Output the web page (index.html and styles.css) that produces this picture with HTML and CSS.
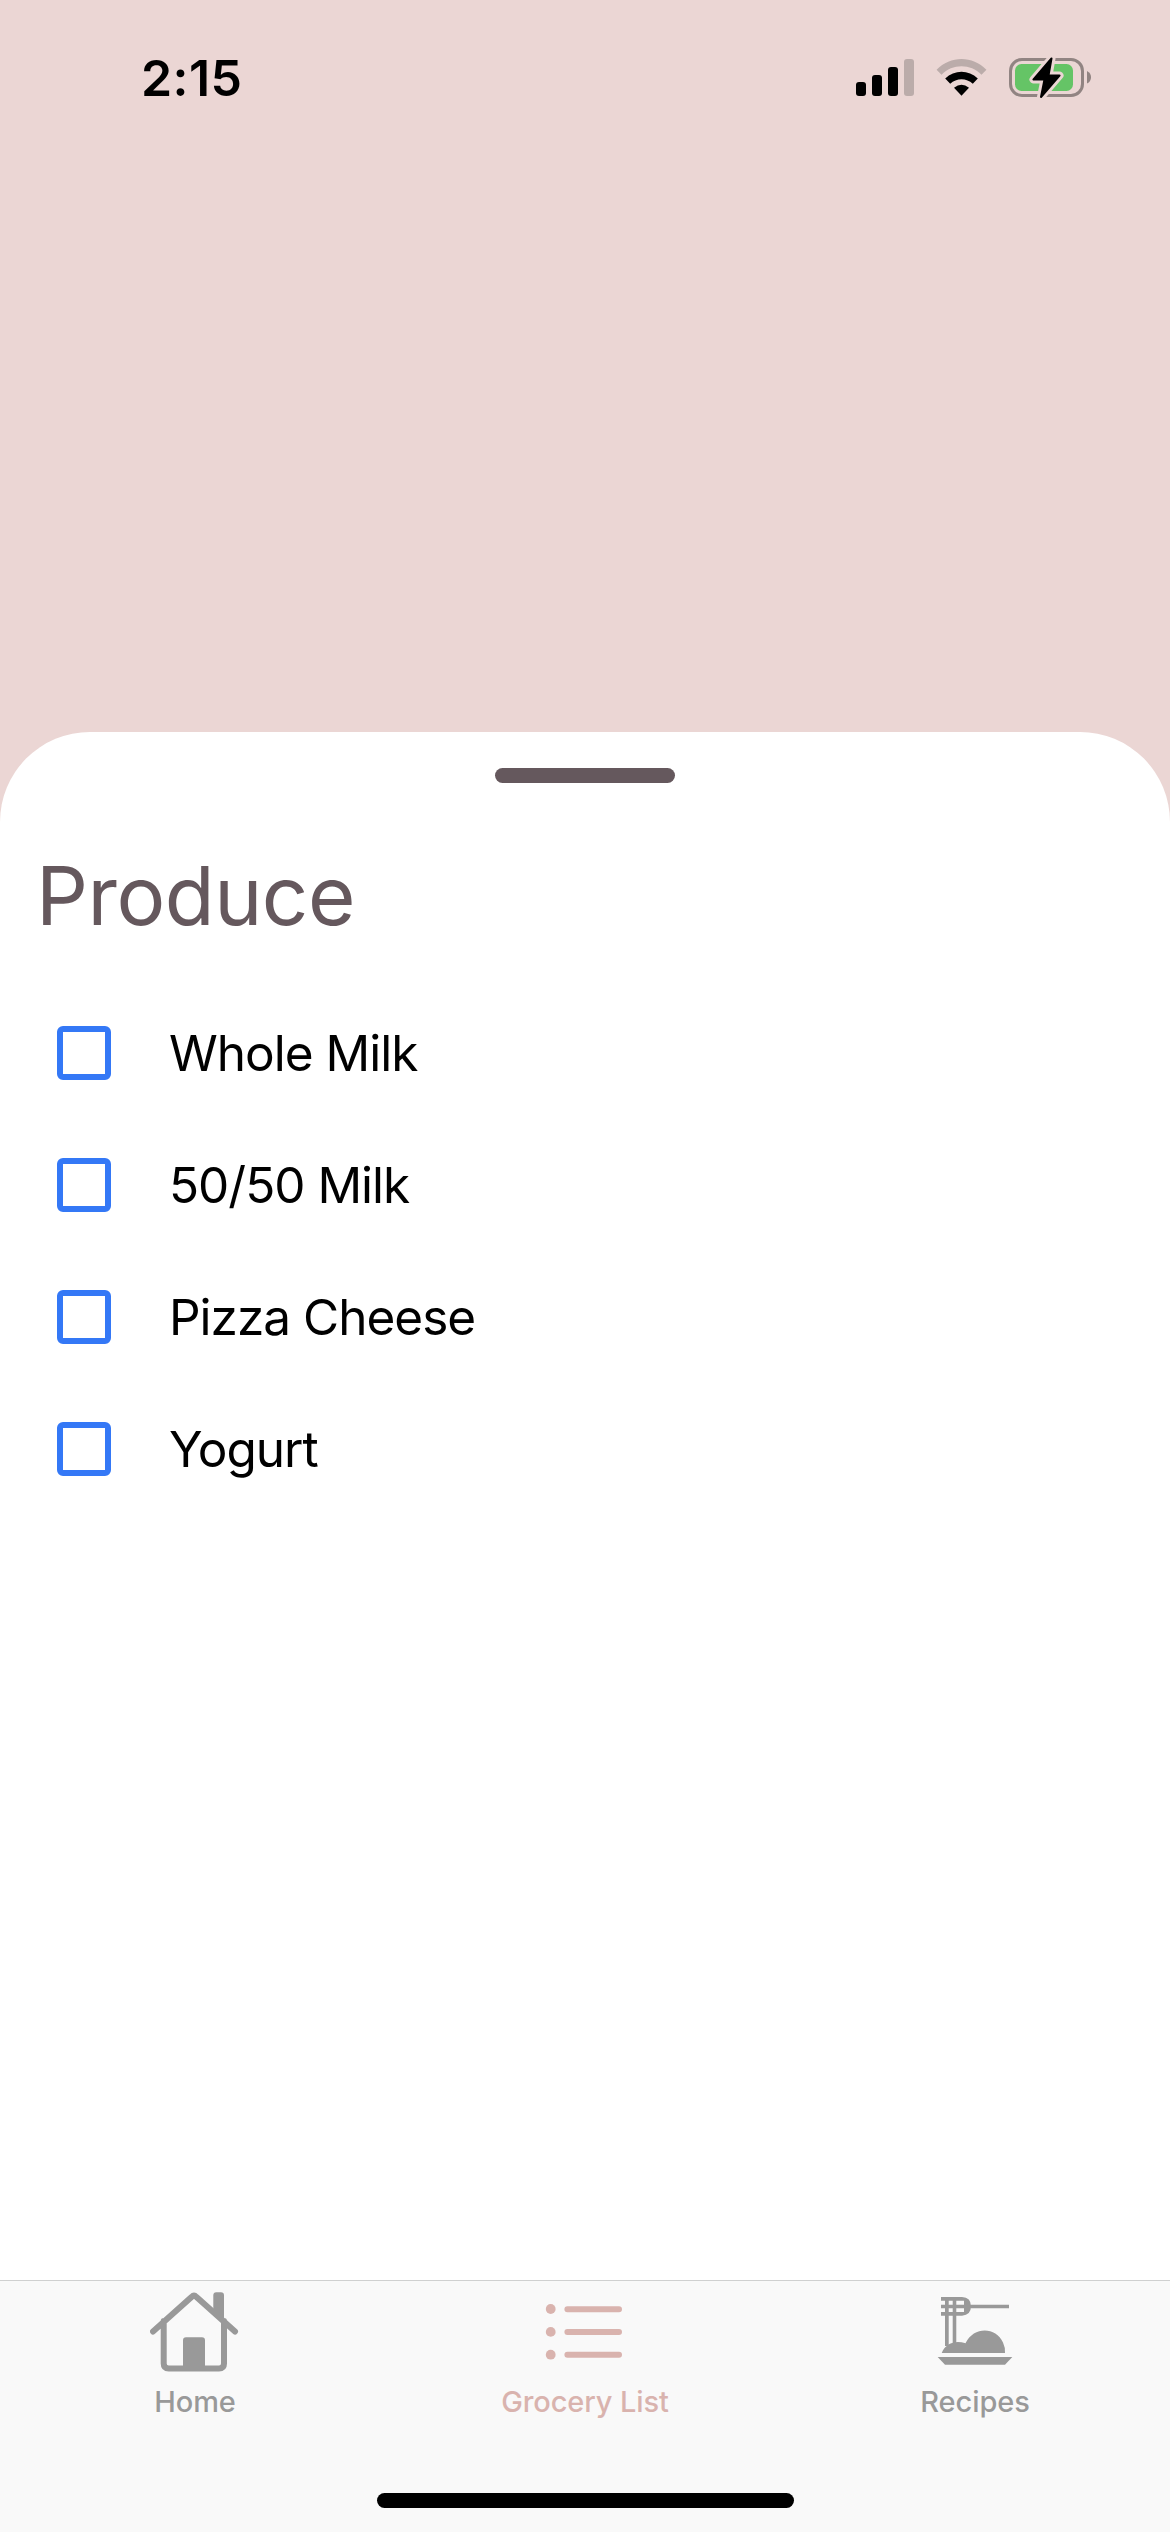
FILE: index.html
```html
<!DOCTYPE html>
<html lang="en">
<head>
<meta charset="utf-8">
<title>Grocery List</title>
<link rel="stylesheet" href="styles.css">
</head>
<body>
<div class="screen">
  <header class="status-bar">
    <span class="time">2:15</span>
    <div class="indicators">
      <svg class="signal" width="58" height="38" viewBox="0 0 58 38">
        <rect x="0" y="23" width="10" height="14" rx="3"/>
        <rect x="16" y="16" width="10" height="21" rx="3"/>
        <rect x="32" y="8" width="10" height="29" rx="3"/>
        <rect class="dim" x="48" y="0" width="10" height="37" rx="3"/>
      </svg>
      <svg class="wifi" width="52" height="38" viewBox="0 0 52 38">
        <path class="dim" d="M.6 10.7C14.5-3.5 36.500-3.500 50.400 10.700L45.500 15.700C34.500 4.500 16.500 4.500 5.500 15.700Z"/>
        <path d="M9.200 19.500C18.500 10.400 32.500 10.400 41.800 19.500L36.800 24.800C30.500 18.700 20.500 18.700 14.200 24.800Z"/>
        <path d="M18 28.700Q25.500 22.700 33 28.700L25.500 36.700Z"/>
      </svg>
      <svg class="battery" width="83" height="42" viewBox="0 0 83 42">
        <rect class="shell" x="1.500" y="3.500" width="72" height="36" rx="11.500"/>
        <rect class="charge" x="6" y="8" width="58" height="27" rx="6.500"/>
        <path class="tip" d="M78 15Q82 17 82 21.300T78 27.600Z"/>
        <path class="bolt-gap" d="M42.500 2.500L24.500 23.500H35.500L32 41L50.500 19.500H39.500Z"/>
        <path class="bolt" d="M42.500 2.500L24.500 23.500H35.500L32 41L50.500 19.500H39.500Z"/>
      </svg>
    </div>
  </header>

  <main class="sheet">
    <div class="handle"></div>
    <h1 class="title">Produce</h1>
    <ul class="items">
      <li class="item"><span class="checkbox"></span><span class="name">Whole Milk</span></li>
      <li class="item"><span class="checkbox"></span><span class="name">50/50 Milk</span></li>
      <li class="item"><span class="checkbox"></span><span class="name">Pizza Cheese</span></li>
      <li class="item"><span class="checkbox"></span><span class="name">Yogurt</span></li>
    </ul>
  </main>

  <footer class="footer">
    <nav class="tabs">
      <a class="tab">
        <svg width="90" height="90" viewBox="0 0 90 90">
          <path class="line" d="M3 45.500L41.500 11Q44 8.500 46.500 11L85 45.500M13.700 35V77.600Q13.700 82.500 18.700 82.500H69Q74 82.500 74 77.600V35"/>
          <path d="M33 83V54.300Q33 51.300 36 51.300H52Q55 51.300 55 54.300V83ZM63.300 27V9.300Q63.300 6.300 66.300 6.300H71Q74 6.300 74 9.300V37Z"/>
        </svg>
        <span class="label">Home</span>
      </a>
      <a class="tab active">
        <svg width="90" height="90" viewBox="0 0 90 90">
          <circle cx="10.700" cy="23" r="4.900"/><circle cx="10.700" cy="45.900" r="4.900"/><circle cx="10.700" cy="68.700" r="4.900"/>
          <path class="line" d="M27.400 23.200H79M27.400 46H79M27.400 68.700H79"/>
        </svg>
        <span class="label">Grocery List</span>
      </a>
      <a class="tab">
        <svg width="90" height="90" viewBox="0 0 90 90">
          <path d="M11 11H32Q41 11.500 41 20.300T32 29.700H11V26H34V22.300H11V18.700H34V14.700H11ZM15 11H18.700V60H15ZM22.700 11H26.300V60H22.700ZM40 18.700H79V22.300H40Z"/>
          <path d="M11.700 67C16 56.500 26 54.200 35.500 57.300C44 40 66 41 73 56.500Q75.400 61.500 75 67Z"/>
          <path d="M7.700 71H82.300L75 78.700H15Z"/>
        </svg>
        <span class="label">Recipes</span>
      </a>
    </nav>
    <div class="home-indicator"></div>
  </footer>
</div>
</body>
</html>
```

FILE: styles.css
```css
* { box-sizing: border-box; }

body {
  margin: 0;
  font-family: Inter, "Liberation Sans", sans-serif;
}

.screen {
  width: 1170px;
  height: 2532px;
  display: flex;
  flex-direction: column;
  background: #ebd6d4;
  overflow: hidden;
}

.status-bar {
  height: 732px;
  padding: 48px 78px 0 141px;
  display: flex;
  justify-content: space-between;
  align-items: flex-start;
}

.time {
  font-size: 50px;
  line-height: 60px;
  font-weight: 600;
  letter-spacing: 0.4px;
}

.indicators {
  display: flex;
  align-items: flex-start;
  padding-top: 8px;
}

.signal, .wifi { margin-top: 3px; }
.wifi { margin-left: 22px; }
.battery { margin-left: 21px; }
.dim { fill: #bbacaa; }
.shell { fill: none; stroke: #918482; stroke-width: 3; }
.charge { fill: #65c466; }
.tip { fill: #918482; }
.bolt-gap { fill: #ebd6d4; stroke: #ebd6d4; stroke-width: 8; stroke-linejoin: round; }
.bolt { stroke: #000; stroke-width: 2; stroke-linejoin: round; }

.sheet {
  flex: 1;
  padding-top: 36px;
  background: #fff;
  border-radius: 90px 90px 0 0;
}

.handle {
  width: 180px;
  height: 15px;
  margin: 0 auto;
  border-radius: 7.5px;
  background: #65585d;
}

.title {
  margin: 63px 0 0 36px;
  font-size: 81.500px;
  line-height: 100px;
  font-weight: 400;
  letter-spacing: -0.5px;
  color: #65585d;
}

.items {
  list-style: none;
  margin: 41px 0 0;
  padding: 0 57px;
}

.item {
  height: 132px;
  display: flex;
  align-items: center;
  gap: 58px;
}

.checkbox {
  width: 54px;
  height: 54px;
  border: 6px solid #3478f6;
  border-radius: 6px;
}

.name {
  font-size: 49.500px;
  line-height: 60px;
  letter-spacing: -1px;
}

.footer {
  height: 252px;
  border-top: 1px solid #cfd0d0;
  background: #f9f9f9;
}

.tabs {
  height: 212px;
  padding-top: 5px;
  display: flex;
}

.tab {
  flex: 1;
  display: flex;
  flex-direction: column;
  align-items: center;
  color: #999;
}

.tab svg { fill: currentColor; }
.tab .line { fill: none; stroke: currentColor; stroke-width: 6; stroke-linecap: round; }
.active { color: #d9b3ae; }

.label {
  margin-top: 8px;
  font-size: 29px;
  line-height: 36px;
  font-weight: 500;
  letter-spacing: -0.1px;
}

.home-indicator {
  width: 417px;
  height: 15px;
  margin: 0 auto;
  border-radius: 7.5px;
  background: #000;
}
```
